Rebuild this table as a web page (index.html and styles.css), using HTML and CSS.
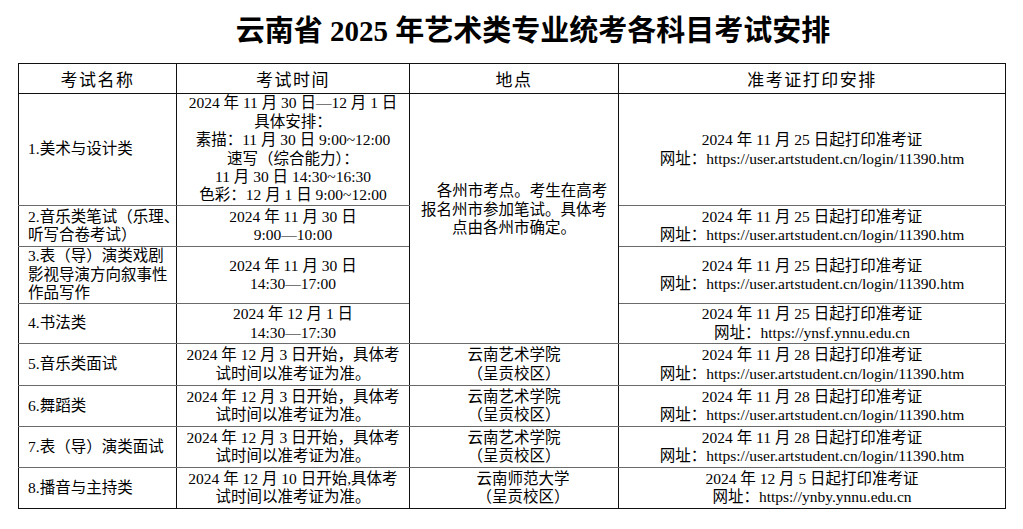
FILE: index.html
```html
<!DOCTYPE html>
<html lang="zh-CN">
<head>
<meta charset="utf-8">
<title>云南省 2025 年艺术类专业统考各科目考试安排</title>
<link rel="stylesheet" href="styles.css">
</head>
<body>
<h1 class="title">云南省 2025 年艺术类专业统考各科目考试安排</h1>
<table class="sched">
  <colgroup>
    <col class="c-name">
    <col class="c-time">
    <col class="c-place">
    <col class="c-print">
  </colgroup>
  <thead>
    <tr class="r-head">
      <th>考试名称</th>
      <th>考试时间</th>
      <th>地点</th>
      <th>准考证打印安排</th>
    </tr>
  </thead>
  <tbody>
    <tr class="r1">
      <td class="name">1.美术与设计类</td>
      <td class="mid">2024 年 11 月 30 日—12 月 1 日<br>具体安排：<br>素描：11 月 30 日 9:00~12:00<br>速写（综合能力）：<br>11 月 30 日 14:30~16:30<br>色彩：12 月 1 日 9:00~12:00</td>
      <td class="place-merged" rowspan="4"><span class="pl pl-first">各州市考点。考生在高考</span><span class="pl">报名州市参加笔试。具体考</span><span class="pl">点由各州市确定。</span></td>
      <td class="mid">2024 年 11 月 25 日起打印准考证<br>网址：<span class="url">https://user.artstudent.cn/login/11390.htm</span></td>
    </tr>
    <tr class="r2">
      <td class="name">2.音乐类笔试（乐理、<br>听写合卷考试）</td>
      <td class="mid">2024 年 11 月 30 日<br>9:00—10:00</td>
      <td class="mid">2024 年 11 月 25 日起打印准考证<br>网址：<span class="url">https://user.artstudent.cn/login/11390.htm</span></td>
    </tr>
    <tr class="r3">
      <td class="name">3.表（导）演类戏剧<br>影视导演方向叙事性<br>作品写作</td>
      <td class="mid">2024 年 11 月 30 日<br>14:30—17:00</td>
      <td class="mid">2024 年 11 月 25 日起打印准考证<br>网址：<span class="url">https://user.artstudent.cn/login/11390.htm</span></td>
    </tr>
    <tr class="r4">
      <td class="name">4.书法类</td>
      <td class="mid">2024 年 12 月 1 日<br>14:30—17:30</td>
      <td class="mid">2024 年 11 月 25 日起打印准考证<br>网址：<span class="url">https://ynsf.ynnu.edu.cn</span></td>
    </tr>
    <tr class="r5">
      <td class="name">5.音乐类面试</td>
      <td class="mid">2024 年 12 月 3 日开始，具体考<br>试时间以准考证为准。</td>
      <td class="mid">云南艺术学院<br>（呈贡校区）</td>
      <td class="mid">2024 年 11 月 28 日起打印准考证<br>网址：<span class="url">https://user.artstudent.cn/login/11390.htm</span></td>
    </tr>
    <tr class="r6">
      <td class="name">6.舞蹈类</td>
      <td class="mid">2024 年 12 月 3 日开始，具体考<br>试时间以准考证为准。</td>
      <td class="mid">云南艺术学院<br>（呈贡校区）</td>
      <td class="mid">2024 年 11 月 28 日起打印准考证<br>网址：<span class="url">https://user.artstudent.cn/login/11390.htm</span></td>
    </tr>
    <tr class="r7">
      <td class="name">7.表（导）演类面试</td>
      <td class="mid">2024 年 12 月 3 日开始，具体考<br>试时间以准考证为准。</td>
      <td class="mid">云南艺术学院<br>（呈贡校区）</td>
      <td class="mid">2024 年 11 月 28 日起打印准考证<br>网址：<span class="url">https://user.artstudent.cn/login/11390.htm</span></td>
    </tr>
    <tr class="r8 last">
      <td class="name">8.播音与主持类</td>
      <td class="mid">2024 年 12 月 10 日开始,具体考<br>试时间以准考证为准。</td>
      <td class="mid shift">云南师范大学<br>（呈贡校区）</td>
      <td class="mid">2024 年 12 月 5 日起打印准考证<br>网址：<span class="url">https://ynby.ynnu.edu.cn</span></td>
    </tr>
  </tbody>
</table>
</body>
</html>
```

FILE: styles.css
```css
html, body {
  margin: 0;
  padding: 0;
  background: #ffffff;
  color: #000000;
}

body {
  font-family: "Liberation Serif", "Noto Sans CJK SC", serif;
}

.title {
  margin: 13px 0 14px 0;
  padding-left: 43px;
  height: 36px;
  line-height: 36px;
  font-size: 29px;
  font-weight: bold;
  text-align: center;
  font-family: "Liberation Serif", "Noto Sans CJK SC", serif;
  white-space: nowrap;
}

.sched {
  margin-left: 18px;
  width: 988px;
  table-layout: fixed;
  border-collapse: collapse;
  border: 1px solid #111111;
}

.c-name { width: 158px; }
.c-time { width: 233px; }
.c-place { width: 209px; }
.c-print { width: 387px; }

.sched th {
  border: 1px solid #111111;
  padding: 0;
  font-family: "Noto Sans CJK SC", sans-serif;
  font-weight: normal;
  font-size: 17px;
  letter-spacing: 1.5px;
  line-height: 20px;
  text-align: center;
  vertical-align: middle;
}

.sched td {
  border-left: 1px solid #111111;
  border-right: 1px solid #111111;
  border-top: 1px solid #6a6a6a;
  border-bottom: 1px solid #6a6a6a;
  padding: 0;
  font-size: 15.5px;
  line-height: 18.4px;
  vertical-align: middle;
  white-space: nowrap;
}

.sched .last td {
  border-bottom: 1px solid #111111;
}

.r-head { height: 30px; }
.r1 { height: 112px; }
.r2 { height: 41px; }
.r3 { height: 57px; }
.r4 { height: 40px; }
.r5 { height: 42px; }
.r6 { height: 41px; }
.r7 { height: 41px; }
.r8 { height: 41px; }

.name {
  text-align: left;
  padding-left: 9px !important;
}

.mid {
  text-align: center;
}

.shift {
  padding-left: 18px !important;
}

.place-merged {
  text-align: center;
  padding-bottom: 17px !important;
}

.pl {
  display: block;
}

.pl-first {
  padding-left: 16px;
}

.url {
  letter-spacing: 0;
}
```
